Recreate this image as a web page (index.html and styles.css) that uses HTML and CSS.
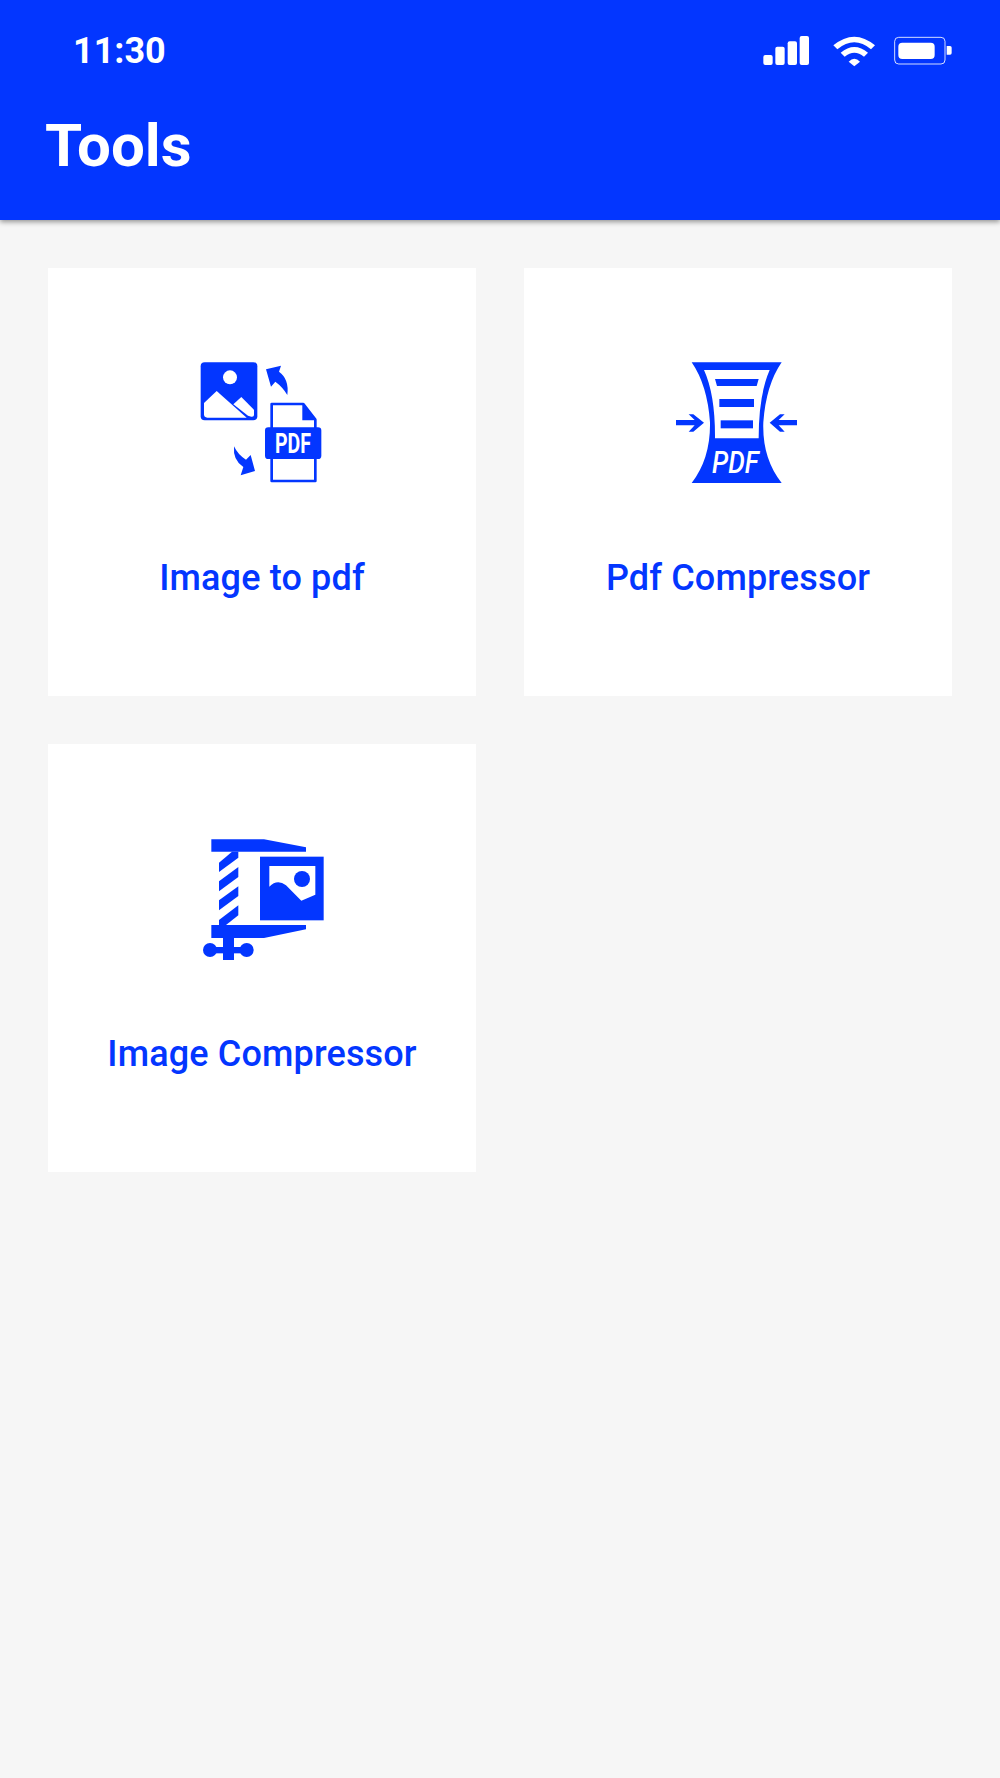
FILE: index.html
```html
<!DOCTYPE html>
<html lang="en">
<head>
    <meta charset="UTF-8">
    <meta name="viewport" content="width=device-width, initial-scale=1.0">
    <title>Tools</title>
    <link rel="stylesheet" href="styles.css">
</head>
<body>
    <header class="app-header">
        <div class="status-bar">
            <span class="time">11:30</span>
            <svg class="status-icons" viewBox="0 0 690 180" fill="#fff">
                <rect x="70" y="105" width="28" height="30" rx="6"/>
                <rect x="106" y="80" width="28" height="55" rx="6"/>
                <rect x="143" y="64" width="28" height="71" rx="6"/>
                <rect x="179" y="48" width="28" height="87" rx="6"/>
                <path d="M280 76 Q343 24 405 76 L393 88 Q343 46 292 88Z"/>
                <path d="M302 98 Q343 64 384 98 L372 110 Q343 86 314 110Z"/>
                <path d="M326 125 Q343 108 360 125 L343 139Z"/>
                <rect x="464" y="52" width="151" height="80" rx="12" fill="none" stroke="#fff" stroke-width="2.5"/>
                <rect x="475" y="68" width="109" height="49" rx="12"/>
                <path d="M620 78 h10 a5 5 0 0 1 5 5 v16 a5 5 0 0 1 -5 5 h-10z"/>
            </svg>
        </div>
        <h1 class="app-title">Tools</h1>
    </header>

    <main class="tools">
        <a class="tool-card">
            <svg class="tool-icon" viewBox="6 0 480 450">
                <!-- picture -->
                <rect x="62" y="52" width="170" height="174" rx="12" fill="#0336ff"/>
                <circle cx="150" cy="97" r="21" fill="#fff"/>
                <path d="M72 174 L110 138 L200 218 L82 218 Q72 218 72 208Z" fill="#fff"/>
                <path d="M160 178 L184 156 L222 194 L222 210 Q222 216 214 215 L204 212Z" fill="#fff"/>
                <!-- arrows -->
                <path d="M258 73 L303 62 L297 80 Q328 102 322 150 Q308 126 286 110 L273 125Z" fill="#0336ff"/>
                <path d="M225 378 L182 391 L190 366 Q158 346 162 304 Q174 330 198 344 L212 330Z" fill="#0336ff"/>
                <!-- pdf sheet -->
                <path d="M275 177 H370 L406 224 V408 H275Z" fill="#fff" stroke="#0336ff" stroke-width="8" stroke-linejoin="round"/>
                <path d="M367 177 H372 L408 226 H367Z" fill="#0336ff"/>
                <rect x="255" y="247" width="169" height="95" rx="10" fill="#0336ff"/>
                <text class="icon-text" x="339" y="325" text-anchor="middle" font-size="84" textLength="108" lengthAdjust="spacingAndGlyphs">PDF</text>
            </svg>
            <span class="tool-name">Image to pdf</span>
        </a>

        <a class="tool-card">
            <svg class="tool-icon" viewBox="-6 0 480 450">
                <path d="M95 52 H365 Q318 120 310 232 Q306 340 365 414 H95 Q152 340 150 232 Q142 120 95 52Z" fill="#0336ff"/>
                <path d="M132 75 H329 Q296 150 296 280 H165 Q166 150 132 75Z" fill="#fff"/>
                <path d="M165 102 H296 L290 123 H171Z" fill="#0336ff"/>
                <rect x="178" y="162" width="104" height="24" fill="#0336ff"/>
                <rect x="182" y="226" width="97" height="24" fill="#0336ff"/>
                <!-- side arrows -->
                <path d="M48 225 H104 L86 208 H100 L132 233 L100 260 H86 L104 241 H48Z" fill="#0336ff"/>
                <path d="M411 225 H356 L374 208 H360 L329 233 L360 260 H374 L356 241 H411Z" fill="#0336ff"/>
                <text class="icon-text-slant" x="226" y="385" text-anchor="middle" font-size="96" textLength="140" lengthAdjust="spacingAndGlyphs">PDF</text>
            </svg>
            <span class="tool-name">Pdf Compressor</span>
        </a>

        <a class="tool-card">
            <svg class="tool-icon" viewBox="-24 -15 480 450">
                <!-- clamp -->
                <path d="M64 40 H222 L348 64 V77 H64Z" fill="#0336ff"/>
                <path d="M64 297 H348 V310 L222 336 H64Z" fill="#0336ff"/>
                <path d="M126 77 H145 V95 L87 138 V110Z" fill="#0336ff"/>
                <path d="M145 123 V153 L87 196 V166Z" fill="#0336ff"/>
                <path d="M145 181 V210 L87 253 V223Z" fill="#0336ff"/>
                <path d="M145 238 V268 L108 297 H87 V282Z" fill="#0336ff"/>
                <rect x="99" y="336" width="33" height="66" fill="#0336ff"/>
                <rect x="60" y="363" width="110" height="19" fill="#0336ff"/>
                <circle cx="60" cy="372" r="21" fill="#0336ff"/>
                <circle cx="170" cy="372" r="21" fill="#0336ff"/>
                <!-- picture -->
                <rect x="210" y="92" width="191" height="191" fill="#0336ff"/>
                <path d="M238 120 H376 V206 L334 224 L288 178 Q262 158 238 182Z" fill="#fff"/>
                <circle cx="336" cy="159" r="24" fill="#0336ff"/>
            </svg>
            <span class="tool-name">Image Compressor</span>
        </a>
    </main>
</body>
</html>
```

FILE: styles.css
```css
* {
    box-sizing: border-box;
}

body {
    margin: 0;
    min-height: 100vh;
    font-family: 'Roboto', sans-serif;
    background-color: #f6f6f6;
}

.app-header {
    height: 220px;
    background-color: #0336ff;
    color: #fff;
    box-shadow: 0 2px 5px rgba(0, 0, 0, 0.4);
}

.status-bar {
    display: flex;
    justify-content: space-between;
    align-items: center;
    padding: 20px 30px 0 73px;
}

.time {
    padding-top: 2px;
    font-size: 36px;
    font-weight: 700;
}

.status-icons {
    width: 230px;
    height: 60px;
}

.app-title {
    margin: 0;
    padding: 31px 0 0 45px;
    font-size: 60px;
    font-weight: 700;
    line-height: 70px;
}

.tools {
    display: grid;
    grid-template-columns: repeat(2, 428px);
    gap: 48px;
    padding: 48px;
}

.tool-card {
    display: flex;
    flex-direction: column;
    align-items: center;
    height: 428px;
    padding-top: 77px;
    background-color: #fff;
}

.tool-icon {
    width: 160px;
    height: 150px;
}

.tool-name {
    margin-top: 63px;
    font-size: 36px;
    font-weight: 500;
    line-height: 40px;
    letter-spacing: 0.15px;
    color: #0336ff;
}

.icon-text {
    font-family: 'Roboto', sans-serif;
    font-weight: 700;
    fill: #fff;
}

.icon-text-slant {
    font-family: 'Roboto', sans-serif;
    font-style: italic;
    font-weight: 500;
    fill: #fff;
}
```
